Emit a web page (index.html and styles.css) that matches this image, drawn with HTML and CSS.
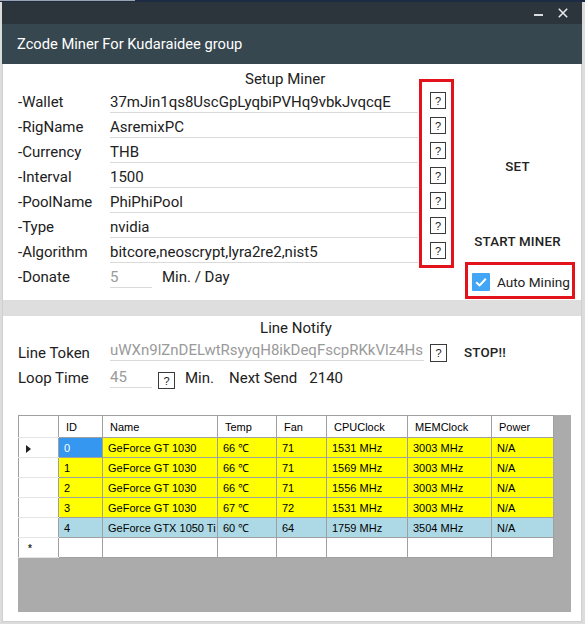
FILE: index.html
```html
<!DOCTYPE html>
<html>
<head>
<meta charset="utf-8">
<link rel="stylesheet" href="styles.css">
</head>
<body>
<div class="topstrip"><div class="lit"></div></div>
<div class="window">
  <div class="titlebar">
    <svg class="ico" width="10" height="10" viewBox="0 0 10 10"><line x1="0" y1="7" x2="9" y2="7" stroke="#d9dcde" stroke-width="2"/></svg>
    <svg class="ico close" width="10" height="10" viewBox="0 0 10 10"><path d="M0.8 0.8 L9.2 9.2 M9.2 0.8 L0.8 9.2" stroke="#e6e8ea" stroke-width="1.6" fill="none"/></svg>
  </div>
  <div class="header">Zcode Miner For Kudaraidee group</div>
  <div class="body">
    <section class="setup">
      <div class="form">
        <div class="setup-title">Setup Miner</div>
        <div class="field"><span class="label">-Wallet</span><span class="input wide">37mJin1qs8UscGpLyqbiPVHq9vbkJvqcqE</span></div>
        <div class="field"><span class="label">-RigName</span><span class="input wide">AsremixPC</span></div>
        <div class="field"><span class="label">-Currency</span><span class="input wide">THB</span></div>
        <div class="field"><span class="label">-Interval</span><span class="input wide">1500</span></div>
        <div class="field"><span class="label">-PoolName</span><span class="input wide">PhiPhiPool</span></div>
        <div class="field"><span class="label">-Type</span><span class="input wide">nvidia</span></div>
        <div class="field"><span class="label">-Algorithm</span><span class="input wide">bitcore,neoscrypt,lyra2re2,nist5</span></div>
        <div class="field"><span class="label">-Donate</span><span class="input short muted">5</span><span class="unit">Min. / Day</span></div>
      </div>
      <div class="helpbox">
        <span class="q">?</span><span class="q">?</span><span class="q">?</span><span class="q">?</span><span class="q">?</span><span class="q">?</span><span class="q">?</span>
      </div>
      <div class="actions">
        <div class="btn set">SET</div>
        <div class="btn start">START MINER</div>
        <div class="automining">
          <span class="check"><svg width="18" height="18" viewBox="0 0 18 18"><path d="M4.2 9.2 L7.6 12.4 L13.8 5.8" stroke="#fff" stroke-width="2" fill="none"/></svg></span>
          <span class="auto-label">Auto Mining</span>
        </div>
      </div>
    </section>
    <div class="divider"></div>
    <section class="notify">
      <div class="notify-title">Line Notify</div>
      <div class="nrow">
        <span class="label">Line Token</span>
        <span class="input token muted">uWXn9lZnDELwtRsyyqH8ikDeqFscpRKkVlz4Hs</span>
        <span class="q tall">?</span>
        <span class="btn stop">STOP!!</span>
      </div>
      <div class="nrow">
        <span class="label">Loop Time</span>
        <span class="input short loop muted">45</span>
        <span class="q loopq">?</span>
        <span class="txt min">Min.</span>
        <span class="txt next">Next Send</span>
        <span class="txt count">2140</span>
      </div>
      <div class="grid">
        <table>
          <colgroup>
            <col class="c-rh"><col class="c-id"><col class="c-name"><col class="c-temp"><col class="c-fan"><col class="c-cpu"><col class="c-mem"><col class="c-pow">
          </colgroup>
          <thead>
            <tr><th class="rh"></th><th>ID</th><th>Name</th><th>Temp</th><th>Fan</th><th>CPUClock</th><th>MEMClock</th><th>Power</th></tr>
          </thead>
          <tbody>
            <tr class="yellow"><td class="rh"><span class="arrow"></span></td><td class="sel">0</td><td>GeForce GT 1030</td><td>66 ℃</td><td>71</td><td>1531 MHz</td><td>3003 MHz</td><td>N/A</td></tr>
            <tr class="yellow"><td class="rh"></td><td>1</td><td>GeForce GT 1030</td><td>66 ℃</td><td>71</td><td>1569 MHz</td><td>3003 MHz</td><td>N/A</td></tr>
            <tr class="yellow"><td class="rh"></td><td>2</td><td>GeForce GT 1030</td><td>66 ℃</td><td>71</td><td>1556 MHz</td><td>3003 MHz</td><td>N/A</td></tr>
            <tr class="yellow"><td class="rh"></td><td>3</td><td>GeForce GT 1030</td><td>67 ℃</td><td>72</td><td>1531 MHz</td><td>3003 MHz</td><td>N/A</td></tr>
            <tr class="blue"><td class="rh"></td><td>4</td><td>GeForce GTX 1050 Ti</td><td>60 ℃</td><td>64</td><td>1759 MHz</td><td>3504 MHz</td><td>N/A</td></tr>
            <tr class="new"><td class="rh"><span class="star">*</span></td><td></td><td></td><td></td><td></td><td></td><td></td><td></td></tr>
          </tbody>
        </table>
      </div>
    </section>
  </div>
</div>
</body>
</html>
```

FILE: styles.css
```css
* { box-sizing: border-box; }
html, body { margin: 0; padding: 0; }
body {
  width: 585px;
  height: 624px;
  overflow: hidden;
  background: #dcdcdc;
  font-family: Roboto, "Noto Sans", sans-serif;
  color: #212121;
}
.topstrip { height: 2px; background: #1d2b44; }
.topstrip .lit { width: 135px; height: 1px; background: #9aa3ae; }

.window { margin-left: 2px; width: 580px; }
.titlebar {
  height: 22px;
  background: #2b353b;
  display: flex;
  justify-content: flex-end;
  align-items: flex-start;
  padding: 6px 14px 0 0;
  gap: 14px;
}
.ico { display: block; }

.header {
  height: 40px;
  background: #37474f;
  color: #fff;
  font-size: 14.7px;
  line-height: 40px;
  padding-left: 15px;
}

.body {
  height: 558px;
  background: #fff;
  border: 1px solid #d0d0d0;
  border-top: none;
}

.setup {
  height: 236px;
  display: flex;
  align-items: flex-start;
  padding: 4px 0 0 15px;
}
.form { width: 400px; }
.setup-title {
  line-height: 22px;
  font-size: 15px;
  padding-left: 227px;
}
.field { display: flex; height: 25px; font-size: 15px; }
.label { width: 92px; line-height: 24px; font-size: 15px; flex: none; }
.input {
  display: block;
  padding-top: 2px;
  line-height: 20px;
  height: 23px;
  border-bottom: 1px solid #dadada;
  white-space: nowrap;
  overflow: hidden;
  font-size: 15px;
  flex: none;
}
.input.wide { width: 308px; }
.input.short { width: 42px; }
.muted { color: #9a9a9a; }
.unit { margin-left: 10px; line-height: 24px; }

.helpbox {
  margin: 11px 0 0 1px;
  width: 35px;
  border: 3px solid #e3131c;
  padding: 10px 0 6px 8px;
  display: flex;
  flex-direction: column;
  gap: 8px;
}
.q {
  width: 16px;
  height: 17px;
  border: 1px solid #3a3a3a;
  background: #fff;
  font-family: "Liberation Sans", Arial, sans-serif;
  font-size: 11px;
  color: #222;
  display: flex;
  align-items: center;
  justify-content: center;
  flex: none;
}

.actions {
  width: 127px;
  display: flex;
  flex-direction: column;
  align-items: center;
}
.btn {
  font-size: 13.33px;
  font-weight: 500;
  line-height: 36px;
  color: #222;
  letter-spacing: 0.2px;
}
.btn.set { margin-top: 81px; }
.btn.start { margin-top: 39px; }
.automining {
  margin: 2px 0 0 11px;
  align-self: flex-start;
  width: 110px;
  height: 37px;
  border: 3px solid #e3131c;
  display: flex;
  align-items: center;
  padding: 2px 0 0 4px;
  gap: 7px;
}
.check {
  width: 18px;
  height: 18px;
  background: #42a5f5;
  border-radius: 1px;
  display: block;
  flex: none;
}
.check svg { display: block; }
.auto-label { font-size: 13.6px; color: #222; }

.divider { height: 16px; background: #dedede; }

.notify { padding: 1px 0 0 15px; }
.notify-title {
  line-height: 22px;
  font-size: 15px;
  text-align: center;
  margin: 0 7px 2px 0;
}
.nrow { display: flex; align-items: flex-start; height: 25px; font-size: 15px; }
.input.token { width: 314px; height: 20px; line-height: 19px; padding-top: 0; }
.q.tall { width: 17px; height: 18px; margin: 3px 0 0 6px; }
.btn.stop { margin-left: 17px; line-height: 24px; }
.input.loop { height: 22px; padding-top: 1px; }
.q.loopq { width: 17px; height: 17px; margin: 6px 0 0 6px; }
.txt { line-height: 24px; }
.txt.min { margin-left: 10px; }
.txt.next { margin-left: 15px; }
.txt.count { margin-left: 12px; }

.grid {
  margin-top: 24px;
  width: 553px;
  height: 197px;
  background: #ababab;
}
table {
  border-collapse: collapse;
  table-layout: fixed;
  width: 536px;
  font-family: "Liberation Sans", Arial, sans-serif;
  font-size: 11px;
  color: #000;
}
col.c-rh { width: 40px; }
col.c-id { width: 44px; }
col.c-name { width: 115px; }
col.c-temp { width: 59px; }
col.c-fan { width: 50px; }
col.c-cpu { width: 81px; }
col.c-mem { width: 84px; }
col.c-pow { width: 62px; }
th, td {
  border: 1px solid #a0a0a0;
  padding: 0 0 0 5px;
  text-align: left;
  white-space: nowrap;
  overflow: hidden;
  background: #fff;
}
th { font-weight: normal; height: 22px; padding-left: 7px; }
td { height: 20px; }
th.rh, td.rh { background: #fff; border-top-color: #e4e4e4; border-bottom-color: #e4e4e4; padding-left: 7px; }
thead th.rh { border-top-color: #a0a0a0; }
tr.yellow td { background: #ffff00; }
tr.blue td { background: #add8e6; }
tr td.rh { background: #fff; }
td.sel { background: #3597f0 !important; color: #fff; }
.arrow {
  display: inline-block;
  width: 0;
  height: 0;
  border-left: 5px solid #222;
  border-top: 4px solid transparent;
  border-bottom: 4px solid transparent;
  vertical-align: middle;
}
.star { font-size: 10px; font-weight: bold; padding-left: 2px; color: #333; }
```
